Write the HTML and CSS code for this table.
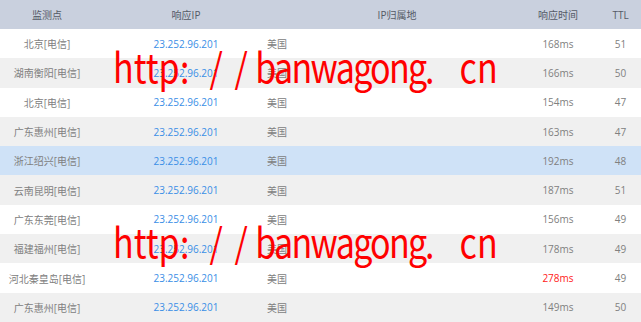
FILE: index.html
```html
<!DOCTYPE html>
<html>
<head>
<meta charset="utf-8">
<link rel="stylesheet" href="styles.css">
</head>
<body>
<div class="page">
  <div class="table">
    <div class="row head">
      <div class="cell">监测点</div>
      <div class="cell">响应IP</div>
      <div class="cell">IP归属地</div>
      <div class="cell">响应时间</div>
      <div class="cell">TTL</div>
    </div>
    <div class="row">
      <div class="cell">北京[电信]</div>
      <div class="cell ip">23.252.96.201</div>
      <div class="cell loc"><span>美国</span></div>
      <div class="cell">168ms</div>
      <div class="cell">51</div>
    </div>
    <div class="row alt">
      <div class="cell">湖南衡阳[电信]</div>
      <div class="cell ip">23.252.96.201</div>
      <div class="cell loc"><span>美国</span></div>
      <div class="cell">166ms</div>
      <div class="cell">50</div>
    </div>
    <div class="row">
      <div class="cell">北京[电信]</div>
      <div class="cell ip">23.252.96.201</div>
      <div class="cell loc"><span>美国</span></div>
      <div class="cell">154ms</div>
      <div class="cell">47</div>
    </div>
    <div class="row alt">
      <div class="cell">广东惠州[电信]</div>
      <div class="cell ip">23.252.96.201</div>
      <div class="cell loc"><span>美国</span></div>
      <div class="cell">163ms</div>
      <div class="cell">47</div>
    </div>
    <div class="row sel">
      <div class="cell">浙江绍兴[电信]</div>
      <div class="cell ip">23.252.96.201</div>
      <div class="cell loc"><span>美国</span></div>
      <div class="cell">192ms</div>
      <div class="cell">48</div>
    </div>
    <div class="row alt">
      <div class="cell">云南昆明[电信]</div>
      <div class="cell ip">23.252.96.201</div>
      <div class="cell loc"><span>美国</span></div>
      <div class="cell">187ms</div>
      <div class="cell">51</div>
    </div>
    <div class="row">
      <div class="cell">广东东莞[电信]</div>
      <div class="cell ip">23.252.96.201</div>
      <div class="cell loc"><span>美国</span></div>
      <div class="cell">156ms</div>
      <div class="cell">49</div>
    </div>
    <div class="row alt">
      <div class="cell">福建福州[电信]</div>
      <div class="cell ip">23.252.96.201</div>
      <div class="cell loc"><span>美国</span></div>
      <div class="cell">178ms</div>
      <div class="cell">49</div>
    </div>
    <div class="row">
      <div class="cell">河北秦皇岛[电信]</div>
      <div class="cell ip">23.252.96.201</div>
      <div class="cell loc"><span>美国</span></div>
      <div class="cell slow">278ms</div>
      <div class="cell">49</div>
    </div>
    <div class="row alt">
      <div class="cell">广东惠州[电信]</div>
      <div class="cell ip">23.252.96.201</div>
      <div class="cell loc"><span>美国</span></div>
      <div class="cell">149ms</div>
      <div class="cell">50</div>
    </div>
  </div>
  <div class="mark mark1">http<span class="colon">:</span><span class="sl1">/</span><span class="sl2">/</span><span class="word">banwagong</span><span class="dot">.</span><span class="cn">cn</span></div>
  <div class="mark mark2">http<span class="colon">:</span><span class="sl1">/</span><span class="sl2">/</span><span class="word">banwagong</span><span class="dot">.</span><span class="cn">cn</span></div>
</div>
</body>
</html>
```

FILE: styles.css
```css
html, body {
  margin: 0;
  padding: 0;
  background: #ffffff;
}
.page {
  position: relative;
  width: 641px;
  height: 322px;
  overflow: hidden;
  font-family: "Open Sans", "Noto Sans CJK SC", sans-serif;
  font-size: 10px;
  color: #808080;
}
.table {
  display: flex;
  flex-direction: column;
}
.row {
  display: grid;
  grid-template-columns: 94px 184px 238px 84px 41px;
  height: 29.3px;
  align-items: center;
  background: #ffffff;
}
.row.head {
  height: 29px;
  background: #c9d0de;
  color: #555b66;
}
.row.alt {
  background: #f0f0f0;
}
.row.sel {
  background: #cfe2f7;
}
.cell {
  text-align: center;
  white-space: nowrap;
}
.cell.ip {
  color: #3a8ee6;
}
.cell.loc {
  text-align: left;
}
.cell.loc span {
  margin-left: -11px;
}
.cell.slow {
  color: #ff2020;
}
.mark {
  position: absolute;
  left: 113px;
  font-family: "Noto Sans CJK SC", sans-serif;
  font-weight: 400;
  font-size: 40px;
  line-height: 40px;
  color: #ff0000;
  white-space: nowrap;
  transform: scaleX(0.85);
  transform-origin: left center;
}
.mark1 {
  top: 46px;
}
.mark2 {
  top: 221px;
}
.colon,
.sl1,
.sl2,
.dot {
  display: inline-block;
  text-align: center;
}
.colon {
  width: 12px;
}
.sl1 {
  width: 30px;
  margin-left: 16px;
}
.sl2 {
  width: 29px;
}
.word {
  margin-left: 2px;
  letter-spacing: -2px;
}
.dot {
  width: 14px;
  margin-left: -2px;
}
.cn {
  margin-left: 28px;
  letter-spacing: 0;
}
```
